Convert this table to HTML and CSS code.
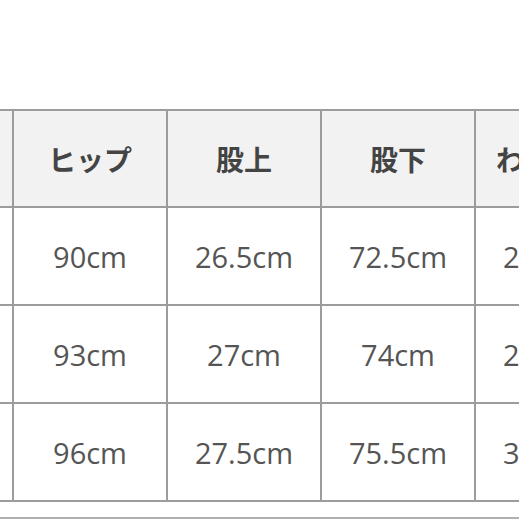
FILE: index.html
```html
<!DOCTYPE html>
<html lang="ja">
<head>
<meta charset="utf-8">
<link rel="stylesheet" href="styles.css">
</head>
<body>
<div class="wrap">
  <table class="size-table">
    <colgroup>
      <col class="c"><col class="c"><col class="c"><col class="c"><col class="c">
    </colgroup>
    <thead>
      <tr>
        <th>ウエスト</th>
        <th>ヒップ</th>
        <th>股上</th>
        <th>股下</th>
        <th>わたり幅</th>
      </tr>
    </thead>
    <tbody>
      <tr><td>64cm</td><td>90cm</td><td>26.5cm</td><td>72.5cm</td><td>28.5cm</td></tr>
      <tr><td>67cm</td><td>93cm</td><td>27cm</td><td>74cm</td><td>29.5cm</td></tr>
      <tr><td>70cm</td><td>96cm</td><td>27.5cm</td><td>75.5cm</td><td>30.5cm</td></tr>
    </tbody>
  </table>
  <div class="rule"></div>
</div>
</body>
</html>
```

FILE: styles.css
```css
html, body {
  margin: 0;
  padding: 0;
  background: #ffffff;
  overflow: hidden;
  width: 519px;
  height: 519px;
}
.wrap {
  padding-top: 109px;
  margin-left: -142px;
  width: 800px;
}
.size-table {
  border-collapse: collapse;
  table-layout: fixed;
  width: 770px;
}
.size-table .c {
  width: 154px;
}
.size-table th,
.size-table td {
  border: 2px solid #9c9c9c;
  text-align: center;
  vertical-align: middle;
  padding: 0;
  white-space: nowrap;
  overflow: hidden;
}
.size-table th {
  height: 95px;
  background: #f2f2f2;
  color: #444444;
  font-family: "Noto Sans CJK JP", "Noto Sans", sans-serif;
  font-weight: 700;
  font-size: 28px;
}
.size-table td {
  height: 96px;
  background: #ffffff;
  color: #555555;
  font-family: "Open Sans", "Noto Sans", sans-serif;
  font-weight: 400;
  font-size: 29px;
}
.rule {
  margin-top: 15px;
  border-top: 2px solid #b0b0b0;
}
```
